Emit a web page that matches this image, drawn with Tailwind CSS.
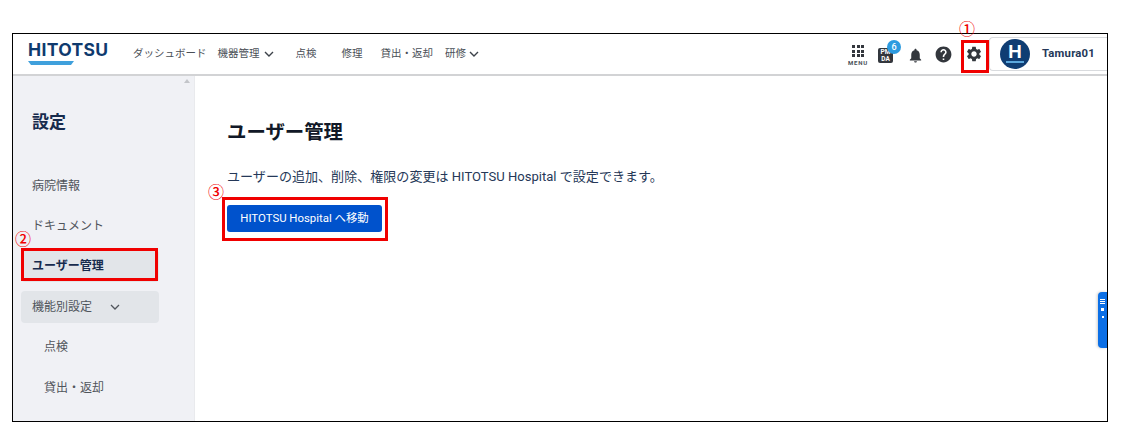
<!DOCTYPE html>
<html lang="ja">
<head>
<meta charset="utf-8">
<script src="https://cdn.jsdelivr.net/npm/@tailwindcss/browser@4"></script>
</head>
<body class="bg-white font-['Roboto','Noto_Sans_CJK_JP',sans-serif]">
<div class="relative w-[1127px] h-[429px] pt-[33px] pl-[12px] overflow-hidden">
  <div class="relative w-[1096px] h-[389px] border border-black flex flex-col overflow-hidden bg-white">
    <header class="h-[42px] shrink-0 border-b-2 border-[#d2d3d5] flex items-center text-[10.5px] text-[#4a4f57]">
      <div class="relative w-[120px] pl-[15px] h-full">
        <span class="absolute left-[15px] top-[4px] text-[17.5px] leading-[24px] font-bold tracking-[0.35px] text-[#0f3a6e] font-['Inter',sans-serif]">HITOTSU</span>
        <svg class="absolute left-[15px] top-[27px]" width="46" height="5" viewBox="0 0 46 5"><path d="M0 0H46L43 4H3Z" fill="#3fa0dc"/></svg>
      </div>
      <nav class="flex items-center h-full">
        <span>ダッシュボード</span>
        <span class="ml-[11px] flex items-center gap-[4px]">機器管理<svg width="10" height="7" viewBox="0 0 10 7" fill="none" stroke="#3d424a" stroke-width="1.4"><path d="M1 1l4 4 4-4"/></svg></span>
        <span class="ml-[22px]">点検</span>
        <span class="ml-[25px]">修理</span>
        <span class="ml-[18px]">貸出・返却</span>
        <span class="ml-[12px] flex items-center gap-[3px]">研修<svg width="10" height="7" viewBox="0 0 10 7" fill="none" stroke="#3d424a" stroke-width="1.4"><path d="M1 1l4 4 4-4"/></svg></span>
      </nav>
      <div class="ml-auto flex items-center h-full">
        <div class="flex flex-col items-center w-[20px] mt-[1px]">
          <div class="grid grid-cols-3 gap-[1.5px] mt-[2px]">
            <i class="block w-[3px] h-[3px] bg-[#33373d]"></i><i class="block w-[3px] h-[3px] bg-[#33373d]"></i><i class="block w-[3px] h-[3px] bg-[#33373d]"></i>
            <i class="block w-[3px] h-[3px] bg-[#33373d]"></i><i class="block w-[3px] h-[3px] bg-[#33373d]"></i><i class="block w-[3px] h-[3px] bg-[#33373d]"></i>
            <i class="block w-[3px] h-[3px] bg-[#33373d]"></i><i class="block w-[3px] h-[3px] bg-[#33373d]"></i><i class="block w-[3px] h-[3px] bg-[#33373d]"></i>
          </div>
          <span class="text-[6px] leading-[7px] mt-[2px] font-bold tracking-[0.8px] text-[#4a4f57]">MENU</span>
        </div>
        <div class="relative ml-[10px] w-[15px] h-[15px] mt-[3px] rounded-[2px] bg-[#33373d] text-white text-[6.5px] leading-[7px] font-bold text-center pt-[1px]">
          <div>PM</div><div>DA</div>
          <span class="absolute left-[9px] top-[-8px] w-[14px] h-[14px] rounded-full bg-[#2d9be0] text-white text-[9px] leading-[14px] font-medium">6</span>
        </div>
        <svg class="ml-[14px] mt-[3px]" width="17" height="17" viewBox="0 0 24 24" fill="#33373d"><path d="M12 22c1.1 0 2-.9 2-2h-4c0 1.1.9 2 2 2zm6-6v-5c0-3.07-1.63-5.64-4.5-6.32V4c0-.83-.67-1.5-1.5-1.5s-1.5.67-1.5 1.5v.68C7.64 5.36 6 7.92 6 11v5l-2 2v1h16v-1l-2-2z"/></svg>
        <svg class="ml-[10px]" width="19" height="19" viewBox="0 0 24 24" fill="#33373d"><path d="M12 2C6.48 2 2 6.48 2 12s4.48 10 10 10 10-4.48 10-10S17.52 2 12 2zm1 17h-2v-2h2v2zm2.07-7.75l-.9.92C13.45 12.9 13 13.5 13 15h-2v-.5c0-1.1.45-2.1 1.17-2.83l1.24-1.26c.37-.36.59-.86.59-1.41 0-1.1-.9-2-2-2s-2 .9-2 2H8c0-2.21 1.79-4 4-4s4 1.79 4 4c0 .88-.36 1.68-.93 2.25z"/></svg>
        <svg class="ml-[12px]" width="18" height="18" viewBox="0 0 24 24" fill="#33373d"><path d="M19.14 12.94c.04-.3.06-.61.06-.94 0-.32-.02-.64-.07-.94l2.03-1.58c.18-.14.23-.41.12-.61l-1.92-3.32c-.12-.22-.37-.29-.59-.22l-2.39.96c-.5-.38-1.03-.7-1.62-.94l-.36-2.54c-.04-.24-.24-.41-.48-.41h-3.84c-.24 0-.43.17-.47.41l-.36 2.54c-.59.24-1.13.57-1.62.94l-2.39-.96c-.22-.08-.47 0-.59.22L2.74 8.87c-.12.21-.08.47.12.61l2.03 1.58c-.05.3-.09.63-.09.94s.02.64.07.94l-2.03 1.58c-.18.14-.23.41-.12.61l1.92 3.32c.12.22.37.29.59.22l2.39-.96c.5.38 1.03.7 1.62.94l.36 2.54c.05.24.24.41.48.41h3.84c.24 0 .44-.17.47-.41l.36-2.54c.59-.24 1.13-.56 1.62-.94l2.39.96c.22.08.47 0 .59-.22l1.92-3.32c.12-.22.07-.47-.12-.61l-2.01-1.58zM12 15.6c-1.98 0-3.6-1.62-3.6-3.6s1.62-3.6 3.6-3.6 3.6 1.62 3.6 3.6-1.62 3.6-3.6 3.6z"/></svg>
        <div class="ml-[6px] w-[118px] h-[34px] border border-r-0 border-[#d9dbde] rounded-l-[4px] flex items-center pl-[10px]">
          <div class="relative w-[30px] h-[30px] rounded-full bg-[#0f3d73] text-white flex justify-center">
            <span class="text-[18px] leading-[26px] font-bold font-['Inter',sans-serif]">H</span>
            <i class="absolute left-[6px] top-[22px] w-[18px] h-[1.5px] bg-[#5ba7dc]"></i>
          </div>
          <span class="ml-[12px] text-[11.3px] font-bold tracking-[0.2px] text-[#253858]">Tamura01</span>
        </div>
      </div>
    </header>
    <div class="flex flex-1 min-h-0">
      <aside class="relative w-[182px] shrink-0 bg-[#f0f1f5] border-r border-[#e9eaed] pt-[34px] text-[12px] text-[#50555c]">
        <svg class="absolute left-[171px] top-[3px]" width="6" height="4" viewBox="0 0 6 4"><path d="M0 4L3 0l3 4z" fill="#c3c5c9"/></svg>
        <h2 class="pl-[19px] text-[17px] leading-[24px] font-bold text-[#172b4d]">設定</h2>
        <ul class="mt-[32px] flex flex-col">
          <li class="h-[40px] flex items-center pl-[19px]">病院情報</li>
          <li class="h-[40px] flex items-center pl-[19px]">ドキュメント</li>
          <li class="h-[32px] my-[4px] mx-[8px] w-[138px] flex items-center pl-[11px] rounded-[4px] bg-[#e2e5e9] font-bold text-[#172b4d]">ユーザー管理</li>
          <li class="h-[32px] mt-[5px] mb-[4px] mx-[8px] w-[138px] flex items-center pl-[11px] rounded-[4px] bg-[#e2e5e9]">機能別設定<svg class="ml-[18px]" width="10" height="6" viewBox="0 0 10 6" fill="none" stroke="#50555c" stroke-width="1.3"><path d="M1 1l4 4 4-4"/></svg></li>
          <li class="h-[40px] flex items-center pl-[31px]">点検</li>
          <li class="h-[41px] flex items-center pl-[31px]">貸出・返却</li>
        </ul>
      </aside>
      <main class="flex-1 relative pl-[33px] pt-[42px]">
        <h1 class="ml-[-1px] mt-[1px] text-[19.4px] leading-[28px] font-bold text-[#111827]">ユーザー管理</h1>
        <p class="ml-[-1px] mt-[21px] text-[13.06px] leading-[18px] text-[#253858]">ユーザーの追加、削除、権限の変更は HITOTSU Hospital で設定できます。</p>
        <button class="ml-[-1px] mt-[19px] w-[155px] h-[27px] rounded-[3px] bg-[#0052cc] text-white text-[11.4px] flex items-center justify-center">HITOTSU Hospital へ移動</button>
      </main>
    </div>
    <div class="absolute right-0 top-[258px] w-[9px] h-[56px] rounded-l-[4px] bg-[#0b6fe6] shadow-[-1px_0_3px_rgba(0,0,0,0.2)] flex flex-col items-center gap-[1px] pt-[7px]">
      <i class="block w-[5px] h-[1px] bg-white"></i><i class="block w-[5px] h-[1px] bg-white"></i><i class="block w-[5px] h-[1px] bg-white"></i>
      <i class="block w-[3px] h-[3px] mt-[3px] bg-white"></i><i class="block w-[2px] h-[2px] mt-[4px] bg-white"></i>
    </div>
  </div>
  <div class="absolute left-[961px] top-[40px] w-[28px] h-[33px] border-[3px] border-[#f00000]"></div>
  <div class="absolute left-[21px] top-[248px] w-[137px] h-[33px] border-[3px] border-[#f00000]"></div>
  <div class="absolute left-[222px] top-[197px] w-[166px] h-[44px] border-[3px] border-[#f00000]"></div>
  <span class="absolute left-[959px] top-[17px] text-[16px] leading-[22px] font-medium text-[#f00000] font-['Noto_Sans_CJK_JP',sans-serif]">①</span>
  <span class="absolute left-[15px] top-[227px] text-[16px] leading-[22px] font-medium text-[#f00000] font-['Noto_Sans_CJK_JP',sans-serif]">②</span>
  <span class="absolute left-[208px] top-[180px] text-[16px] leading-[22px] font-medium text-[#f00000] font-['Noto_Sans_CJK_JP',sans-serif]">③</span>
</div>
</body>
</html>
